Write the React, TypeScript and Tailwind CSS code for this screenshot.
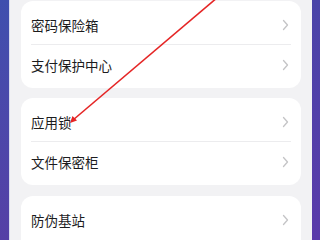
const Chevron = () => (
  <svg width="7" height="12" viewBox="0 0 7 12" fill="none">
    <polyline points="1.5,1.5 5.5,6 1.5,10.5" stroke="#c4c4c6" strokeWidth="1.3" strokeLinecap="round" strokeLinejoin="round" />
  </svg>
);

const Row = ({ label, divider }: { label: string; divider?: boolean }) => (
  <div className="relative flex h-10 items-center justify-between pl-[10px] pr-[12px]">
    <span className="text-[13.5px] text-[#1c1c1e]">{label}</span>
    <Chevron />
    {divider && <div className="absolute bottom-0 left-[10px] right-[10px] h-px bg-[#ececee]" />}
  </div>
);

const Card = ({ items, className }: { items: string[]; className?: string }) => (
  <div className={`mx-[11px] rounded-[12px] bg-white pt-1 ${className ?? "pb-[3px]"}`}>
    {items.map((label, i) => (
      <Row key={label} label={label} divider={i < items.length - 1} />
    ))}
  </div>
);

export default function App() {
  return (
    <div
      className="relative flex h-[240px] w-[320px] overflow-hidden"
      style={{ fontFamily: '"Noto Sans CJK SC", "Noto Sans", sans-serif' }}
    >
      <div className="w-[9px] bg-linear-to-b from-[#3f4fae] to-[#5540a6]" />
      <div className="w-px bg-[#d8dcef]" />
      <div className="flex-1 bg-[#f2f2f4] pt-px">
        <Card items={["密码保险箱", "支付保护中心"]} />
        <Card items={["应用锁", "文件保密柜"]} className="mt-[10px] pb-[3px]" />
        <Card items={["防伪基站"]} className="mt-[11px] pb-6" />
      </div>
      <div className="w-[8px] bg-linear-to-b from-[#4a44a8] to-[#5a3aaa]" />

      <svg className="pointer-events-none absolute inset-0" width="320" height="240" viewBox="0 0 320 240">
        <line x1="218" y1="-3" x2="73" y2="120" stroke="#e52525" strokeWidth="1.6" />
        <polygon points="70,123 72.5,116 77,120.5" fill="#e52525" />
      </svg>
    </div>
  );
}
